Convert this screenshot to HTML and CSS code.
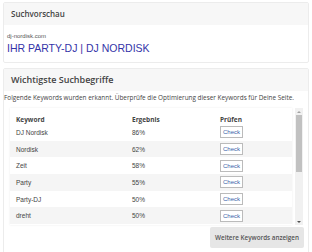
FILE: index.html
```html
<!DOCTYPE html>
<html lang="de">
<head>
<meta charset="utf-8" />
<title>SEO Check</title>
<link rel="stylesheet" href="styles.css">
</head>
<body>
<div class="card">
	<div class="card-head">Suchvorschau</div>
	<div class="card-body preview">
		<div class="url">dj-nordisk.com</div>
		<div class="title">IHR PARTY-DJ | DJ NORDISK</div>
	</div>
</div>
<div class="card">
	<div class="card-head big">Wichtigste Suchbegriffe</div>
	<div class="card-body">
		<p class="intro">Folgende Keywords wurden erkannt. Überprüfe die Optimierung dieser Keywords für Deine Seite.</p>
		<div class="scroller">
			<div class="rows">
				<table>
					<thead>
						<tr><th>Keyword</th><th>Ergebnis</th><th>Prüfen</th></tr>
					</thead>
					<tbody>
						<tr><td>DJ Nordisk</td><td>86%</td><td><button>Check</button></td></tr>
						<tr><td>Nordisk</td><td>62%</td><td><button>Check</button></td></tr>
						<tr><td>Zeit</td><td>58%</td><td><button>Check</button></td></tr>
						<tr><td>Party</td><td>55%</td><td><button>Check</button></td></tr>
						<tr><td>Party-DJ</td><td>50%</td><td><button>Check</button></td></tr>
						<tr><td>dreht</td><td>50%</td><td><button>Check</button></td></tr>
					</tbody>
				</table>
			</div>
			<div class="bar">
				<span class="arrow up"></span>
				<span class="thumb"></span>
				<span class="track"></span>
				<span class="arrow down"></span>
			</div>
		</div>
		<div class="actions">
			<button class="more">Weitere Keywords anzeigen</button>
		</div>
	</div>
</div>
</body>
</html>
```
FILE: styles.css
```css
body {
	font-family: "Open Sans", "Noto Sans", sans-serif;
	margin: 2px 3px 0;
	padding: 0;
	color: #444;
	background: #fff;
}
.card {
	border: 1px solid #ececec;
	border-radius: 2px;
	margin-bottom: 5px;
}
.card:last-child {
	margin-bottom: 0;
}
.card-head {
	background: #f7f7f7;
	font-size: 8px;
	font-weight: 600;
	color: #444;
	padding: 6px 7px;
	line-height: 10px;
}
.card-head.big {
	font-size: 9px;
	padding: 6px 7px;
}
.preview {
	padding: 7px 2px 7px 3px;
}
.url {
	font-family: "Liberation Sans", Arial, sans-serif;
	font-size: 6px;
	color: #555;
	line-height: 9px;
}
.title {
	font-family: "Liberation Sans", Arial, sans-serif;
	font-size: 10.5px;
	color: #3434a8;
	line-height: 14px;
}
.intro {
	font-size: 6.4px;
	margin: 2px 0 6px 0;
	line-height: 9px;
	color: #444;
}
.scroller {
	display: flex;
	gap: 3px;
	height: 117px;
	margin: 0 5px 0 6px;
}
.rows {
	flex: 1;
	overflow: hidden;
	box-shadow: 0 0 2px rgba(0, 0, 0, 0.08);
}
.bar {
	width: 8px;
	display: flex;
	flex-direction: column;
	background: #f1f1f1;
}
.arrow {
	height: 7px;
	display: flex;
	justify-content: center;
	align-items: center;
}
.arrow::before {
	content: "";
	border-left: 2px solid transparent;
	border-right: 2px solid transparent;
}
.arrow.up::before {
	border-bottom: 2px solid #a3a3a3;
}
.arrow.down::before {
	border-top: 2px solid #505050;
}
.thumb {
	height: 57px;
	margin: 0 1px;
	background: #c1c1c1;
}
.track {
	flex: 1;
}
table {
	width: 100%;
	border-collapse: collapse;
	font-family: "Liberation Sans", Arial, sans-serif;
	font-size: 6.5px;
	color: #444;
}
th {
	text-align: left;
	font-family: "Open Sans", sans-serif;
	font-weight: 700;
	height: 16px;
	padding: 0 6px;
	vertical-align: bottom;
}
td {
	height: 16.7px;
	padding: 0 6px;
}
th:first-child, td:first-child {
	width: 104px;
}
th:nth-child(2), td:nth-child(2) {
	width: 76px;
}
tbody tr:nth-child(even) {
	background: #f5f5f5;
}
td button {
	font-family: "Liberation Sans", Arial, sans-serif;
	font-size: 6px;
	color: #3a5fa8;
	background: #fff;
	border: 1px solid #bbb;
	padding: 1px 2px;
	line-height: 8px;
}
.actions {
	display: flex;
	justify-content: flex-end;
	padding: 2px 4px 6px 0;
}
.more {
	font-family: "Open Sans", sans-serif;
	font-size: 6.3px;
	font-weight: 600;
	color: #555;
	background: #e6e6e6;
	border: none;
	border-radius: 2px;
	padding: 6px 5px;
}
```
